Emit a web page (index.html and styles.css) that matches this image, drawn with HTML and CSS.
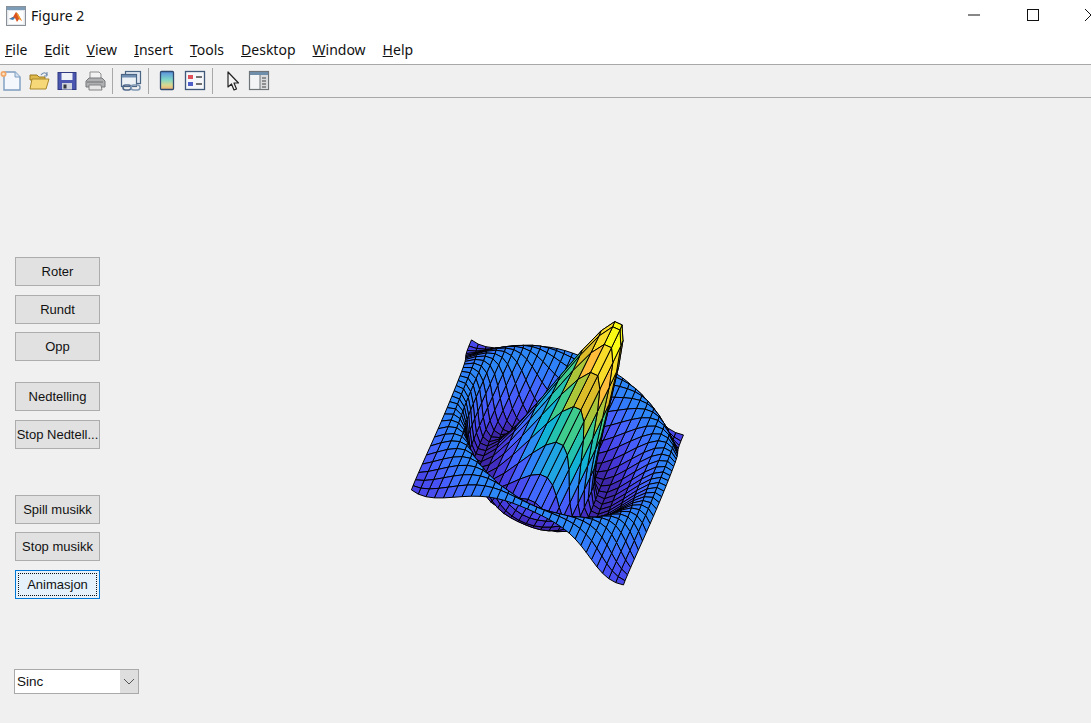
FILE: index.html
```html
<!DOCTYPE html>
<html lang="en">
<head>
  <meta charset="UTF-8" />
  <title>Figure 2</title>
  <link rel="stylesheet" href="styles.css">
</head>
<body>
  <!-- Title bar -->
  <header class="titlebar">
    <svg class="app-icon" width="20" height="20" viewBox="0 0 20 20">
      <rect x="0.5" y="0.5" width="19" height="19" fill="#e4e8ec" stroke="#8a9097"/>
      <rect x="1" y="1" width="18" height="3" fill="#7d9cb8"/>
      <rect x="2.5" y="5" width="15" height="13" fill="#fff"/>
      <path d="M3 13l4-2 3-5 2 2 4 7-3-2-2 3-2-4z" fill="#d9531e"/>
      <path d="M3 13l4-2 2 1-2 2z" fill="#3f7fb5"/>
      <path d="M10 6l2 2 4 7-3-2z" fill="#f0a030"/>
    </svg>
    <span class="title-text">Figure 2</span>
    <div class="window-buttons">
      <svg class="win-min" width="12" height="2" viewBox="0 0 12 2"><path d="M0 1h12" stroke="#111" stroke-width="1"/></svg>
      <svg class="win-max" width="12" height="12" viewBox="0 0 12 12"><rect x="0.5" y="0.5" width="11" height="11" fill="none" stroke="#111"/></svg>
      <svg class="win-close" width="6" height="12" viewBox="0 0 6 12"><path d="M0 0l6 6-6 6" fill="none" stroke="#111"/></svg>
    </div>
  </header>

  <!-- Menu -->
  <nav class="menubar">
    <a href="#"><u>F</u>ile</a>
    <a href="#"><u>E</u>dit</a>
    <a href="#"><u>V</u>iew</a>
    <a href="#"><u>I</u>nsert</a>
    <a href="#"><u>T</u>ools</a>
    <a href="#"><u>D</u>esktop</a>
    <a href="#"><u>W</u>indow</a>
    <a href="#"><u>H</u>elp</a>
  </nav>

  <!-- Toolbar -->
  <div class="toolbar">
    <svg class="tool" viewBox="0 0 22 22">
      <path d="M4 2h11l5 5v13H4z" fill="#f4f8fc" stroke="#7d9cc0" stroke-width="1.4"/>
      <path d="M15 2v5h5" fill="#d5e3f0" stroke="#7d9cc0"/>
      <circle cx="3.5" cy="4" r="3" fill="#f2a766"/>
      <circle cx="3.5" cy="4" r="1.3" fill="#fbe3c8"/>
    </svg>
    <svg class="tool" viewBox="0 0 22 22">
      <path d="M2 8V5h7l2 2h6v3H2z" fill="#e0b94d" stroke="#9a7a20"/>
      <path d="M2 19l2-10h17l-3 10z" fill="#f6d878" stroke="#a8862a"/>
      <path d="M13 5c2-3 5-3 6 0" fill="none" stroke="#6a87a8" stroke-width="1.2"/>
      <path d="M19 2v4h-3" fill="none" stroke="#6a87a8"/>
    </svg>
    <svg class="tool" viewBox="0 0 22 22">
      <rect x="2" y="2.5" width="18" height="17" fill="#4a56b0" stroke="#2f3a80"/>
      <rect x="5.5" y="3" width="11" height="7" fill="#eef1f6"/>
      <rect x="6" y="13" width="10" height="6.5" fill="#cfd3dc"/>
      <rect x="7.5" y="14.5" width="3" height="4" fill="#33383f"/>
    </svg>
    <svg class="tool" viewBox="0 0 22 22">
      <path d="M6 2h9l2 2v6H6z" fill="#f2f2f2" stroke="#8d8d8d"/>
      <path d="M2 11l3-3h13l3 3v6H2z" fill="#aeb0b2" stroke="#77797b"/>
      <path d="M5 15h12l1 5H5z" fill="#e6e6e6" stroke="#838383"/>
      <path d="M3 12h16" stroke="#6f7173"/>
    </svg>
    <span class="tool-sep"></span>
    <svg class="tool" viewBox="0 0 22 22">
      <rect x="5.5" y="1.5" width="15" height="12" fill="#dfe8f2" stroke="#4a6484" stroke-width="1.2"/>
      <rect x="1.5" y="4.5" width="15" height="12" fill="#edf2f7" stroke="#4a6484" stroke-width="1.2"/>
      <rect x="2" y="5" width="14" height="2.5" fill="#6f8db0"/>
      <rect x="3" y="15" width="8" height="5" rx="2.5" fill="none" stroke="#506a8a" stroke-width="1.6"/>
      <rect x="11" y="15" width="9" height="5" rx="2.5" fill="none" stroke="#7f98b4" stroke-width="1.6"/>
    </svg>
    <span class="tool-sep"></span>
    <svg class="tool" viewBox="0 0 22 22">
      <defs>
        <linearGradient id="bar" x1="0" y1="0" x2="0" y2="1">
          <stop offset="0" stop-color="#5a8fe0"/>
          <stop offset="0.45" stop-color="#7fd6c8"/>
          <stop offset="0.75" stop-color="#d8d890"/>
          <stop offset="1" stop-color="#f4b070"/>
        </linearGradient>
      </defs>
      <rect x="4.5" y="1.5" width="13" height="18" rx="1" fill="url(#bar)" stroke="#2f4a6e" stroke-width="1.3"/>
    </svg>
    <svg class="tool" viewBox="0 0 22 22">
      <rect x="1.5" y="1.5" width="19" height="18" fill="#f4f6fa" stroke="#3f5778" stroke-width="1.3"/>
      <rect x="4" y="5" width="5" height="4" fill="#e0505a"/>
      <rect x="4" y="12" width="5" height="4" fill="#4f5fc8"/>
      <path d="M12 7h6M12 14h6" stroke="#444" stroke-width="1.6"/>
    </svg>
    <span class="tool-sep"></span>
    <svg class="tool" viewBox="0 0 22 22">
      <path d="M8 2v15l3.5-3 2.5 6 2.5-1-2.5-6h4.5z" fill="#f4f4f4" stroke="#222" stroke-width="1.2" stroke-linejoin="round"/>
    </svg>
    <svg class="tool" viewBox="0 0 22 22">
      <rect x="1.5" y="1.5" width="19" height="18" fill="#f2f4f6" stroke="#6f7478" stroke-width="1.2"/>
      <rect x="2" y="2" width="18" height="3" fill="#6f8eaa"/>
      <rect x="12" y="5" width="8" height="14" fill="#d8dadc"/>
      <path d="M12 5v14" stroke="#6f7478"/>
      <path d="M14 8h4M14 11h4M14 14h4M14 17h4" stroke="#444" stroke-width="1.2"/>
    </svg>
  </div>

  <!-- Figure area -->
  <main class="figure">
    <div class="controls">
      <button class="push">Roter</button>
      <button class="push tight">Rundt</button>
      <button class="push">Opp</button>
      <button class="push group-start">Nedtelling</button>
      <button class="push">Stop Nedtell...</button>
      <button class="push group-wide tight">Spill musikk</button>
      <button class="push">Stop musikk</button>
      <button class="push focused"><span>Animasjon</span></button>
      <div class="dropdown">
        <span class="dropdown-value">Sinc</span>
        <span class="dropdown-arrow">
          <svg width="12" height="7" viewBox="0 0 12 7"><path d="M1 1l5 5 5-5" fill="none" stroke="#555"/></svg>
        </span>
      </div>
    </div>
    <svg id="plot" class="plot" viewBox="400 310 300 290"></svg>
  </main>

  <script src="script.js"></script>
</body>
</html>
```

FILE: styles.css
```css
body {
  margin: 0;
  height: 723px;
  overflow: hidden;
  display: flex;
  flex-direction: column;
  background: #f0f0f0;
  font-family: "Noto Sans", sans-serif;
  color: #111;
}

/* Title bar */
.titlebar {
  height: 32px;
  background: #fff;
  display: flex;
  align-items: center;
  padding-left: 6px;
}
.app-icon {
  margin-right: 5px;
}
.title-text {
  font-size: 14px;
  padding-bottom: 2px;
}
.window-buttons {
  margin-left: auto;
  display: flex;
  align-items: center;
  padding-bottom: 2px;
}
.win-min {
  margin-right: 47px;
}
.win-max {
  margin-right: 46px;
}

/* Menu */
.menubar {
  height: 32px;
  background: #fff;
  display: flex;
  align-items: center;
  gap: 17px;
  padding-left: 5px;
  border-bottom: 1px solid #a8a8a8;
}
.menubar a {
  color: #111;
  text-decoration: none;
  font-size: 14px;
  padding-top: 2px;
}

/* Toolbar */
.toolbar {
  height: 32px;
  display: flex;
  align-items: center;
  border-bottom: 1px solid #a8a8a8;
}
.tool {
  width: 22px;
  height: 22px;
  margin-right: 6px;
}
.tool-sep {
  width: 1px;
  height: 26px;
  background: #a8a8a8;
  margin-right: 7px;
}

/* Figure */
.figure {
  flex: 1;
  display: flex;
  align-items: flex-start;
}
.controls {
  width: 400px;
  box-sizing: border-box;
  padding: 159px 0 0 15px;
  display: flex;
  flex-direction: column;
  align-items: flex-start;
}
.push {
  width: 85px;
  height: 29px;
  margin-bottom: 9px;
  padding: 0;
  border: 1px solid #adadad;
  background: #e1e1e1;
  font-family: "Liberation Sans", sans-serif;
  font-size: 13px;
  color: #111;
}
.tight {
  margin-bottom: 8px;
}
.group-start {
  margin-top: 12px;
}
.group-wide {
  margin-top: 37px;
}
.focused {
  padding: 2px;
  border: 1px solid #0078d7;
  background: #e5f1fb;
}
.focused span {
  display: flex;
  align-items: center;
  justify-content: center;
  height: 100%;
  border: 1px dotted #111;
  box-sizing: border-box;
}
.dropdown {
  margin-top: 61px;
  margin-left: -1px;
  width: 125px;
  height: 25px;
  box-sizing: border-box;
  border: 1px solid #a9a9a9;
  background: #fff;
  display: flex;
  font-family: "Liberation Sans", sans-serif;
  font-size: 13.5px;
}
.dropdown-value {
  flex: 1;
  padding-left: 2px;
  line-height: 23px;
}
.dropdown-arrow {
  width: 18px;
  background: #dedede;
  display: flex;
  align-items: center;
  justify-content: center;
}
.plot {
  width: 300px;
  height: 290px;
  margin-top: 212px;
}
```

FILE: script.js
```js
// MATLAB sinc surface: R = sqrt(X.^2 + Y.^2) + eps; Z = sin(R)./R
const parula = [
  [.2422,.1504,.6603],[.2504,.1650,.7076],[.2578,.1818,.7511],[.2647,.1978,.7952],
  [.2706,.2147,.8364],[.2751,.2342,.8710],[.2783,.2559,.8991],[.2803,.2782,.9221],
  [.2813,.3006,.9414],[.2810,.3228,.9579],[.2795,.3447,.9717],[.2760,.3667,.9829],
  [.2699,.3892,.9906],[.2602,.4123,.9952],[.2440,.4358,.9988],[.2206,.4603,.9973],
  [.1963,.4847,.9892],[.1834,.5074,.9798],[.1786,.5289,.9682],[.1764,.5499,.9520],
  [.1687,.5703,.9359],[.1540,.5902,.9218],[.1460,.6091,.9079],[.1380,.6276,.8973],
  [.1248,.6459,.8883],[.1113,.6635,.8763],[.0952,.6798,.8598],[.0689,.6948,.8394],
  [.0297,.7082,.8163],[.0036,.7203,.7917],[.0067,.7312,.7660],[.0433,.7411,.7394],
  [.0964,.7500,.7120],[.1408,.7584,.6842],[.1717,.7670,.6554],[.1938,.7758,.6251],
  [.2161,.7843,.5923],[.2470,.7918,.5567],[.2906,.7973,.5188],[.3406,.8008,.4789],
  [.3909,.8029,.4354],[.4456,.8024,.3909],[.5044,.7993,.3480],[.5616,.7942,.3045],
  [.6174,.7876,.2612],[.6720,.7793,.2227],[.7242,.7698,.1910],[.7738,.7598,.1646],
  [.8203,.7498,.1535],[.8634,.7406,.1596],[.9035,.7330,.1774],[.9393,.7288,.2100],
  [.9728,.7298,.2394],[.9956,.7434,.2371],[.9970,.7659,.2199],[.9952,.7893,.2028],
  [.9892,.8136,.1885],[.9786,.8386,.1766],[.9676,.8639,.1643],[.9610,.8890,.1537],
  [.9597,.9135,.1423],[.9628,.9373,.1265],[.9691,.9606,.1064],[.9769,.9839,.0805]
];

// screen = center + x*U + y*V + z*W
const center = [553, 451.6];
const U = [13.25, 5.94];
const V = [-3.75, 9.375];
const W = [66, -129];

// view direction: the null vector of the projection, pointing to the viewer
const view = [
  V[0] * W[1] - W[0] * V[1],
  W[0] * U[1] - U[0] * W[1],
  U[0] * V[1] - V[0] * U[1]
];
const sign = view[2] > 0 ? 1 : -1;

function sinc(x, y) {
  const r = Math.hypot(x, y) + 2.2e-16;
  return Math.sin(r) / r;
}

function project(p) {
  return (center[0] + p[0] * U[0] + p[1] * V[0] + p[2] * W[0]).toFixed(2) + ',' +
         (center[1] + p[0] * U[1] + p[1] * V[1] + p[2] * W[1]).toFixed(2);
}

const cells = 29;
const step = 16 / cells;

// colour limits come from the grid values
const grid = [];
for (let i = 0; i <= cells; i++) {
  for (let j = 0; j <= cells; j++) {
    grid.push(sinc(-8 + i * step, -8 + j * step));
  }
}
const zmin = Math.min(...grid);
const zmax = Math.max(...grid);

function colorFor(z) {
  const idx = Math.min(63, Math.floor((z - zmin) / (zmax - zmin) * 64));
  return 'rgb(' + parula[idx].map(v => Math.round(v * 255)).join(',') + ')';
}

const faces = [];
for (let i = 0; i < cells; i++) {
  for (let j = 0; j < cells; j++) {
    const x0 = -8 + i * step, y0 = -8 + j * step;
    const corners = [[x0, y0], [x0 + step, y0], [x0 + step, y0 + step], [x0, y0 + step]]
      .map(p => [p[0], p[1], sinc(p[0], p[1])]);
    const mid = corners.reduce((a, p) => [a[0] + p[0] / 4, a[1] + p[1] / 4, a[2] + p[2] / 4], [0, 0, 0]);
    faces.push({
      depth: sign * (mid[0] * view[0] + mid[1] * view[1] + mid[2] * view[2]),
      points: corners.map(project).join(' '),
      fill: colorFor(corners[0][2])
    });
  }
}
faces.sort((a, b) => a.depth - b.depth);

document.getElementById('plot').innerHTML = faces.map(f =>
  `<polygon points="${f.points}" fill="${f.fill}" stroke="#000" stroke-width="1" stroke-linejoin="round"/>`
).join('');
```
